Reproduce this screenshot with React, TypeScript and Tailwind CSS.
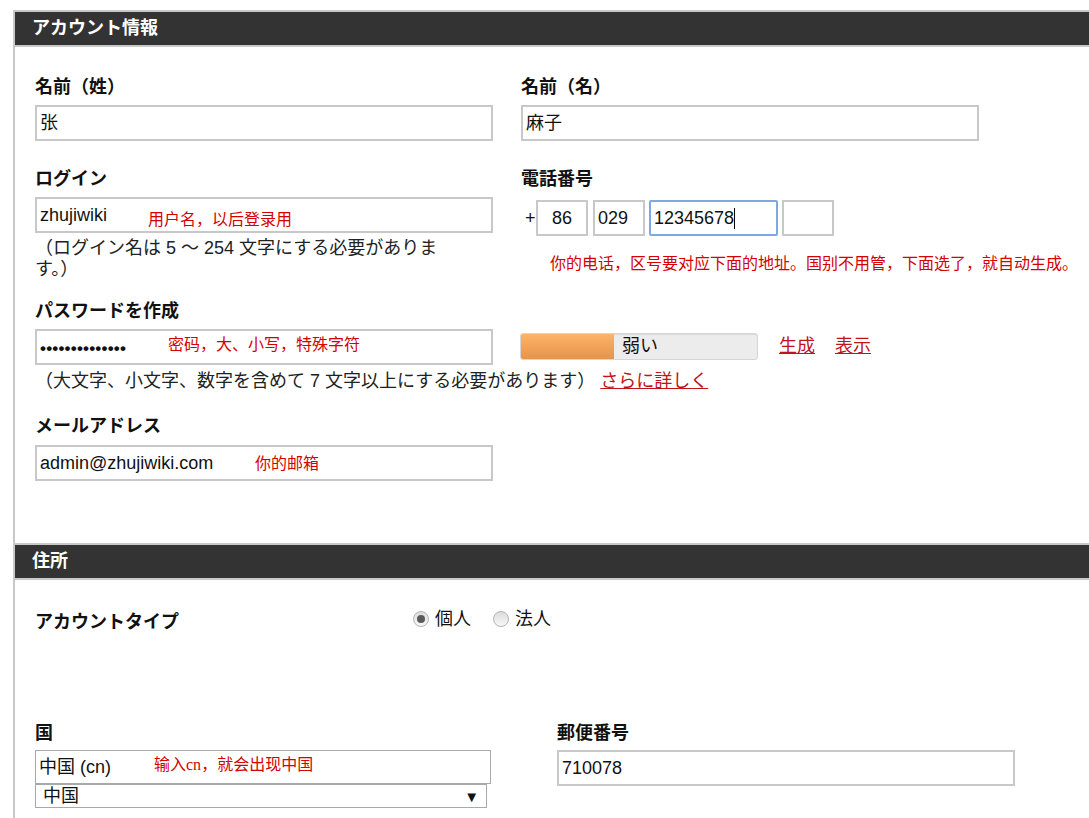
import type { ReactNode } from 'react';

function SectionHeader({ title }: { title: string }) {
  return (
    <div className="h-[37px] border-y-2 border-[#c8c8c8] bg-[#333333] pl-[17px]">
      <span className="text-[18px] font-bold leading-[33px] text-white">{title}</span>
    </div>
  );
}

function Label({ children, className = '' }: { children: ReactNode; className?: string }) {
  return <div className={`h-[24px] text-[18px] font-bold leading-[24px] text-[#111] ${className}`}>{children}</div>;
}

function Note({ children, className = '' }: { children: ReactNode; className?: string }) {
  return (
    <span className={`font-['Noto_Sans_CJK_SC',sans-serif] text-[16px] leading-[22px] text-[#d40000] ${className}`}>
      {children}
    </span>
  );
}

function Box({ children, className = '' }: { children?: ReactNode; className?: string }) {
  return (
    <div className={`flex h-[36px] items-center border-2 border-[#c8c8c8] bg-white px-[3px] text-[18px] text-[#111] ${className}`}>
      {children}
    </div>
  );
}

function Radio({ checked, label }: { checked?: boolean; label: string }) {
  return (
    <div className="flex items-center">
      <span className="flex h-[16px] w-[16px] items-center justify-center rounded-full border border-[#b4b4b4] bg-gradient-to-b from-[#dcdcdc] to-[#f8f8f8]">
        {checked && <span className="h-[8px] w-[8px] rounded-full bg-[#5a5a5a]" />}
      </span>
      <span className="ml-[6px] text-[18px] text-[#111]">{label}</span>
    </div>
  );
}

export default function App() {
  return (
    <div className="min-h-[818px] bg-white pt-[10px] font-['Liberation_Sans','Noto_Sans_CJK_JP',sans-serif]">
      <div className="ml-[13px] min-h-[808px] border-l-2 border-[#c8c8c8]">
        <SectionHeader title="アカウント情報" />

        <div className="pb-[62px] pl-[20px] pt-[28px]">
          {/* 名前 */}
          <div className="flex">
            <div className="w-[458px]">
              <Label className="mb-[6px]">名前（姓）</Label>
              <Box>张</Box>
            </div>
            <div className="ml-[28px] w-[458px]">
              <Label className="mb-[6px]">名前（名）</Label>
              <Box>麻子</Box>
            </div>
          </div>

          {/* ログイン / 電話番号 */}
          <div className="mt-[26px] flex">
            <div className="w-[458px]">
              <Label className="mb-[6px]">ログイン</Label>
              <Box>
                <span className="w-[108px]">zhujiwiki</span>
                <Note className="mt-[5px]">用户名，以后登录用</Note>
              </Box>
              <p className="mt-[5px] text-[18px] leading-[21px] text-[#222]">
                （ログイン名は 5 ～ 254 文字にする必要がありま
                <br />
                す。）
              </p>
            </div>
            <div className="ml-[28px]">
              <Label>電話番号</Label>
              <div className="mt-[9px] flex items-center text-[18px] text-[#111]">
                <span className="w-[15px] pl-[4px]">+</span>
                <Box className="w-[52px] justify-center">86</Box>
                <Box className="ml-[5px] w-[52px]">029</Box>
                <div className="ml-[4px] flex h-[36px] w-[129px] items-center rounded-[2px] border-2 border-[#7ea8e4] px-[3px]">
                  12345678
                  <span className="h-[21px] w-px bg-black" />
                </div>
                <Box className="ml-[4px] w-[52px]" />
              </div>
              <div className="mt-[15px] pl-[29px]">
                <Note>你的电话，区号要对应下面的地址。国别不用管，下面选了，就自动生成。</Note>
              </div>
            </div>
          </div>

          {/* パスワード */}
          <div className="mt-[19px] flex">
            <div className="w-[458px]">
              <Label className="mb-[6px]">パスワードを作成</Label>
              <Box>
                <span className="w-[128px] pt-[3px] text-[17px] font-bold leading-none tracking-[0.2px]">••••••••••••••</span>
                <Note className="-mt-[8px]">密码，大、小写，特殊字符</Note>
              </Box>
            </div>
            <div className="ml-[27px] flex items-center pt-[28px]">
              <div className="flex h-[27px] w-[238px] items-center overflow-hidden rounded-[3px] border border-[#d6d6d6] bg-[#ececec] shadow-[inset_0_1px_1px_rgba(0,0,0,0.08)]">
                <div className="h-full w-[93px] bg-gradient-to-b from-[#fbb468] to-[#e8934a]" />
                <span className="ml-[8px] text-[18px] text-[#111]">弱い</span>
              </div>
              <a className="ml-[21px] text-[18px] text-[#c0131b] underline">生成</a>
              <a className="ml-[20px] text-[18px] text-[#c0131b] underline">表示</a>
            </div>
          </div>
          <p className="mt-[5px] text-[18px] leading-[22px] text-[#222]">
            （大文字、小文字、数字を含めて 7 文字以上にする必要があります）{' '}
            <a className="text-[#c0131b] underline">さらに詳しく</a>
          </p>

          {/* メール */}
          <div className="mt-[22px] w-[458px]">
            <Label className="mb-[7px]">メールアドレス</Label>
            <Box>
              <span className="w-[215px]">admin@zhujiwiki.com</span>
              <Note className="-mt-[3px]">你的邮箱</Note>
            </Box>
          </div>
        </div>

        <SectionHeader title="住所" />

        <div className="pl-[20px] pt-[27px]">
          <div className="flex h-[24px] items-center">
            <Label className="w-[378px] pt-[3px]">アカウントタイプ</Label>
            <Radio checked label="個人" />
            <div className="ml-[22px]">
              <Radio label="法人" />
            </div>
          </div>

          <div className="mt-[90px] flex">
            <div className="w-[456px]">
              <Label className="mb-[5px]">国</Label>
              <div className="flex h-[34px] items-center border border-[#a9a9a9] px-[3px] text-[18px] text-[#111]">
                <span className="w-[115px]">中国 (cn)</span>
                <Note className="-mt-[6px]">
                  输入<span className="font-['Liberation_Serif',serif]">cn</span>，就会出现中国
                </Note>
              </div>
              <div className="flex h-[24px] w-[452px] items-center justify-between border border-[#a9a9a9] pl-[7px] pr-[7px] text-[18px] text-[#111]">
                <span className="leading-[24px]">中国</span>
                <span className="text-[15px] leading-none">▼</span>
              </div>
            </div>
            <div className="ml-[66px] w-[458px]">
              <Label className="mb-[5px]">郵便番号</Label>
              <Box>710078</Box>
            </div>
          </div>
        </div>
      </div>
    </div>
  );
}
